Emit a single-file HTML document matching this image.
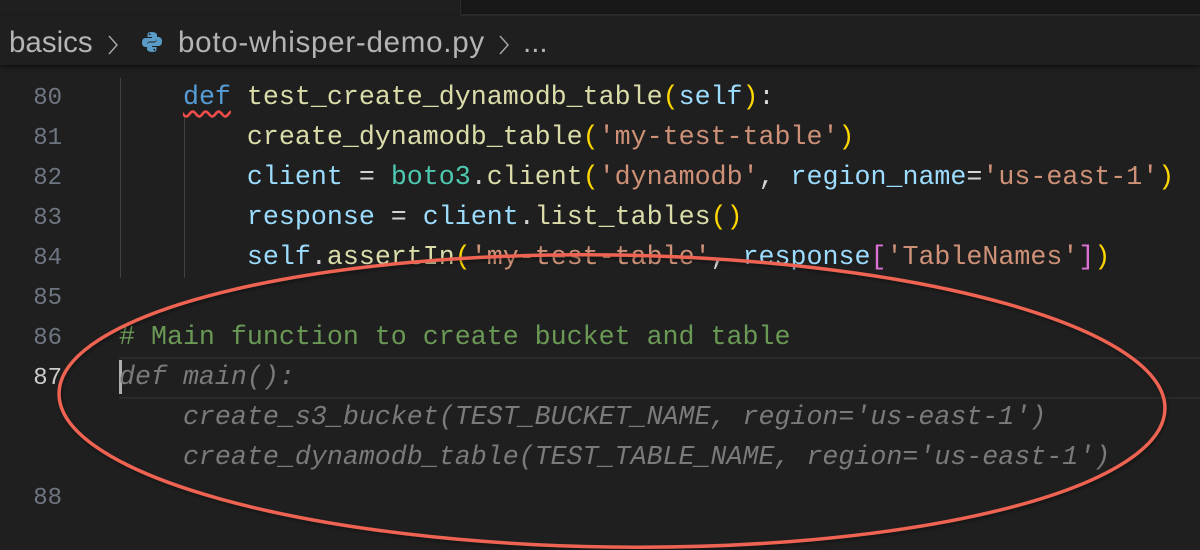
<!DOCTYPE html>
<html><head><meta charset="utf-8"><style>
html,body{margin:0;padding:0;width:1200px;height:550px;overflow:hidden;background:#1f1f1f;}
.top{position:absolute;left:0;top:0;width:1200px;height:15px;background:#1f1f1f;}
.topbox{position:absolute;left:460px;top:0;width:740px;height:14px;background:#181818;border-left:1px solid #2b2b2b;border-bottom:2px solid #2b2b2b;}
.bc{position:absolute;left:0;top:16px;width:1200px;height:49px;background:#1f1f1f;box-shadow:0 2px 4px rgba(0,0,0,.5);font-family:"Liberation Sans",sans-serif;font-size:29.5px;color:#b4b4b4;}
.bc span{position:absolute;top:10px;}
.ln{position:absolute;left:0;width:62px;text-align:right;font-family:"Liberation Mono",monospace;font-size:24px;color:#6e7681;}
.code{position:absolute;left:119px;font-family:"Liberation Mono",monospace;font-size:26.65px;white-space:pre;color:#d4d4d4;}
.k{color:#569cd6}.f{color:#dcdcaa}.s{color:#ce9178}.v{color:#9cdcfe}.p{color:#ffd700}.m{color:#da70d6}.c{color:#6a9955}.t{color:#4ec9b0}
.g{color:#7a7a7a;font-style:italic}
.guide{position:absolute;width:1px;background:#404040;}
</style></head><body>
<div class="top"></div><div class="topbox"></div>
<div class="bc">
<span style="left:9px">basics</span>
<svg style="position:absolute;left:106px;top:18px" width="14" height="22" viewBox="0 0 14 22"><path d="M3 2l8 9-8 9" fill="none" stroke="#aaa" stroke-width="1.4"/></svg>
<svg style="position:absolute;left:140px;top:14px" width="24" height="24" viewBox="0 0 24 24"><path d="M11.5 2c-4 0-4 1.7-4 3v2h4.5v1H5.5C3.5 8 2 9.5 2 12.5S3.5 17 5.5 17H7v-2.5c0-1.6 1.3-3 3-3h4.5c1.4 0 2.5-1.1 2.5-2.5V5c0-1.4-1.5-3-5.5-3z" fill="#5a9bc7"/><path d="M12.5 22c4 0 4-1.7 4-3v-2H12v-1h6.5c2 0 3.5-1.5 3.5-4.5S20.5 7 18.5 7H17v2.5c0 1.6-1.3 3-3 3H9.5C8.1 12.5 7 13.6 7 15v4c0 1.4 1.5 3 5.5 3z" fill="#5a9bc7"/><circle cx="9.7" cy="4.3" r="0.9" fill="#1f1f1f"/><circle cx="14.3" cy="19.7" r="0.9" fill="#1f1f1f"/></svg>
<span style="left:178px;letter-spacing:0.75px">boto-whisper-demo.py</span>
<svg style="position:absolute;left:497px;top:18px" width="14" height="22" viewBox="0 0 14 22"><path d="M3 2l8 9-8 9" fill="none" stroke="#aaa" stroke-width="1.4"/></svg>
<span style="left:523px">...</span>
</div>
<div class="guide" style="left:120px;top:78px;height:200px"></div>
<div class="guide" style="left:184px;top:117px;height:161px"></div>
<div style="position:absolute;left:119px;top:357px;width:1081px;height:38px;border-top:2px solid #2a2a2a;border-bottom:2px solid #2a2a2a;"></div>
<div style="position:absolute;left:119px;top:360px;width:3px;height:34px;background:#aeafad"></div>

<div class="ln" style="top:85px">80</div>
<div class="ln" style="top:125px">81</div>
<div class="ln" style="top:165px">82</div>
<div class="ln" style="top:205px">83</div>
<div class="ln" style="top:245px">84</div>
<div class="ln" style="top:285px">85</div>
<div class="ln" style="top:325px">86</div>
<div class="ln" style="top:365px;color:#cccccc">87</div>
<div class="ln" style="top:485px">88</div>

<div class="code" style="top:83px">    <span class="k" style="text-decoration:underline wavy #f14c4c;text-underline-offset:6px">def</span> <span class="f">test_create_dynamodb_table</span><span class="p">(</span><span class="v">self</span><span class="p">)</span>:</div>
<div class="code" style="top:123px">        <span class="f">create_dynamodb_table</span><span class="p">(</span><span class="s">'my-test-table'</span><span class="p">)</span></div>
<div class="code" style="top:163px">        <span class="v">client</span> = <span class="t">boto3</span>.<span class="f">client</span><span class="p">(</span><span class="s">'dynamodb'</span>, <span class="v">region_name</span>=<span class="s">'us-east-1'</span><span class="p">)</span></div>
<div class="code" style="top:203px">        <span class="v">response</span> = <span class="v">client</span>.<span class="f">list_tables</span><span class="p">()</span></div>
<div class="code" style="top:243px">        <span class="v">self</span>.<span class="f">assertIn</span><span class="p">(</span><span class="s">'my-test-table'</span>, <span class="v">response</span><span class="m">[</span><span class="s">'TableNames'</span><span class="m">]</span><span class="p">)</span></div>
<div class="code c" style="top:323px"># Main function to create bucket and table</div>
<div class="code g" style="top:363px">def main():</div>
<div class="code g" style="top:403px">    create_s3_bucket(TEST_BUCKET_NAME, region='us-east-1')</div>
<div class="code g" style="top:443px">    create_dynamodb_table(TEST_TABLE_NAME, region='us-east-1')</div>

<svg style="position:absolute;left:0;top:0" width="1200" height="550">
<defs><filter id="b" x="-10%" y="-10%" width="120%" height="120%"><feGaussianBlur stdDeviation="1.5"/></filter></defs>
<ellipse cx="613" cy="403" rx="553" ry="146" transform="rotate(0.8 612 401)" fill="none" stroke="#000" stroke-opacity=".35" stroke-width="4" filter="url(#b)"/>
<ellipse cx="612" cy="401" rx="553" ry="146" transform="rotate(0.8 612 401)" fill="none" stroke="#ee6352" stroke-width="3.5"/>
</svg>
</body></html>
